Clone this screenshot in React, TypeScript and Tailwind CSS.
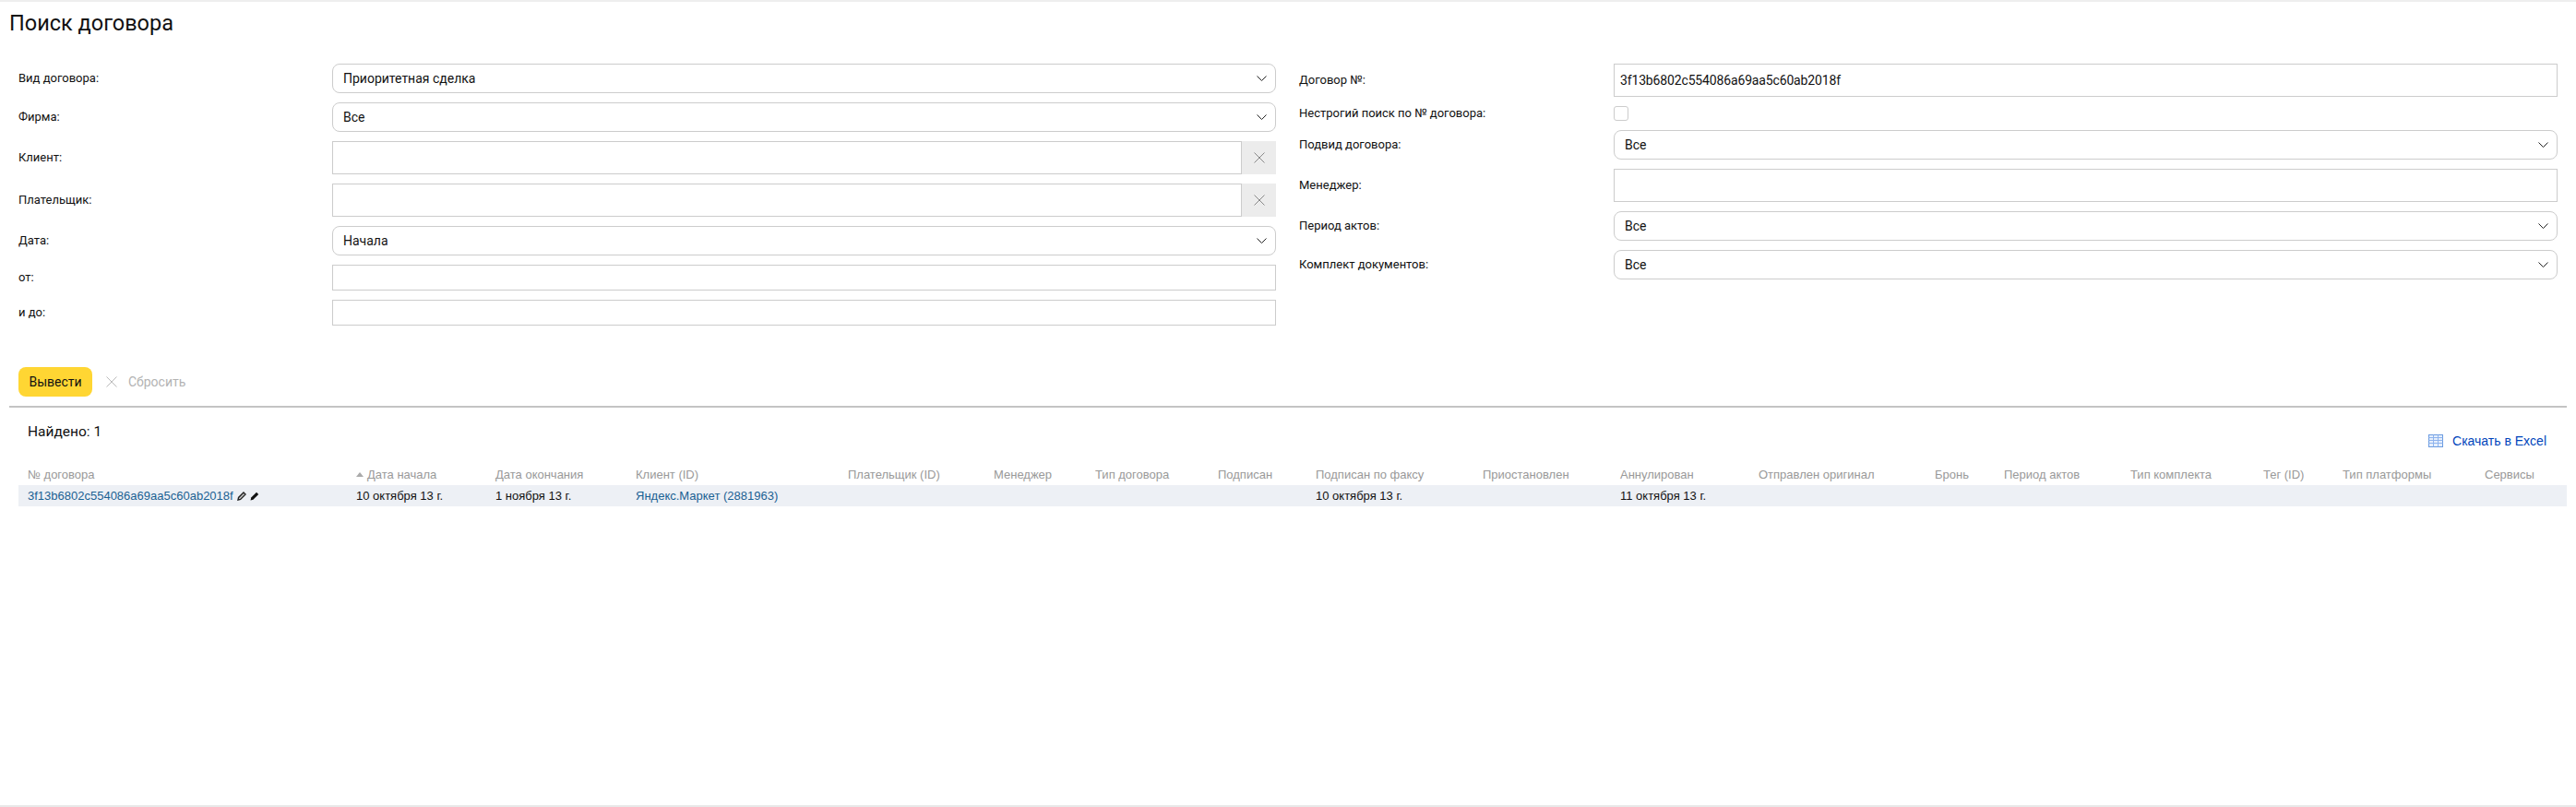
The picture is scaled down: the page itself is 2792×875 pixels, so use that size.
import React from "react";

const columns = [
  "№ договора",
  "Дата начала",
  "Дата окончания",
  "Клиент (ID)",
  "Плательщик (ID)",
  "Менеджер",
  "Тип договора",
  "Подписан",
  "Подписан по факсу",
  "Приостановлен",
  "Аннулирован",
  "Отправлен оригинал",
  "Бронь",
  "Период актов",
  "Тип комплекта",
  "Тег (ID)",
  "Тип платформы",
  "Сервисы",
];

const gridCols =
  "grid grid-cols-[356px_151px_152px_230px_158px_110px_133px_106px_181px_149px_150px_191px_75px_137px_144px_86px_154px_99px]";

function Chevron() {
  return (
    <svg width="11" height="6" viewBox="0 0 11 6" fill="none" className="shrink-0">
      <path d="M.5.5l5 5 5-5" stroke="#222" strokeWidth="1" />
    </svg>
  );
}

function Cross({ size = 12, color = "#888" }: { size?: number; color?: string }) {
  return (
    <svg width={size} height={size} viewBox="0 0 12 12" fill="none" className="shrink-0">
      <path d="M.5.5l11 11M11.5.5l-11 11" stroke={color} strokeWidth="1" />
    </svg>
  );
}

function Row({ label, children, labelW }: { label: string; children: React.ReactNode; labelW: string }) {
  return (
    <div className="flex items-center">
      <div className={`${labelW} shrink-0 text-[13px] leading-4 text-[#111]`}>{label}</div>
      <div className="flex-1">{children}</div>
    </div>
  );
}

function SelectBox({ value }: { value: string }) {
  return (
    <div className="flex h-8 items-center justify-between rounded-lg border border-[#ccc] pl-[11px] pr-[9px] text-[14px] text-[#111]">
      <span>{value}</span>
      <Chevron />
    </div>
  );
}

function TextBox({ value, small }: { value?: string; small?: boolean }) {
  return (
    <div className={`flex items-center border border-[#ccc] pl-[6px] text-[14px] tracking-[-0.15px] text-[#111] ${small ? "h-7" : "h-9"}`}>
      {value}
    </div>
  );
}

function ClearBox() {
  return (
    <div className="flex h-9">
      <div className="flex-1 border border-[#ccc]"></div>
      <div className="flex w-[37px] items-center justify-center bg-[#ececec]">
        <Cross />
      </div>
    </div>
  );
}

export default function App() {
  return (
    <div className="h-[875px] border-b-2 border-[#e8e8e8] bg-white font-['Roboto',sans-serif]">
      <div className="h-[2px] bg-[#eee]"></div>
      <h1 className="h-[67px] pl-[10px] pt-2 text-[23.5px] leading-[30px] text-[#111]">Поиск договора</h1>

      <div className="flex gap-[25px] px-[20px]">
        <div className="flex w-[1363px] flex-col gap-[10px]">
          <Row label="Вид договора:" labelW="w-[340px]"><SelectBox value="Приоритетная сделка" /></Row>
          <Row label="Фирма:" labelW="w-[340px]"><SelectBox value="Все" /></Row>
          <Row label="Клиент:" labelW="w-[340px]"><ClearBox /></Row>
          <Row label="Плательщик:" labelW="w-[340px]"><ClearBox /></Row>
          <Row label="Дата:" labelW="w-[340px]"><SelectBox value="Начала" /></Row>
          <Row label="от:" labelW="w-[340px]"><TextBox small /></Row>
          <Row label="и до:" labelW="w-[340px]"><TextBox small /></Row>
        </div>
        <div className="flex w-[1364px] flex-col gap-[10px]">
          <Row label="Договор №:" labelW="w-[341px]"><TextBox value="3f13b6802c554086a69aa5c60ab2018f" /></Row>
          <Row label="Нестрогий поиск по № договора:" labelW="w-[341px]">
            <div className="h-4 w-4 rounded-[3px] border border-[#ccc]"></div>
          </Row>
          <Row label="Подвид договора:" labelW="w-[341px]"><SelectBox value="Все" /></Row>
          <Row label="Менеджер:" labelW="w-[341px]"><TextBox /></Row>
          <Row label="Период актов:" labelW="w-[341px]"><SelectBox value="Все" /></Row>
          <Row label="Комплект документов:" labelW="w-[341px]"><SelectBox value="Все" /></Row>
        </div>
      </div>

      <div className="ml-[20px] mt-[45px] flex h-8 items-center">
        <button className="h-8 w-20 rounded-lg bg-[#ffd633] text-[14px] text-[#111]">Вывести</button>
        <span className="ml-[15px]"><Cross color="#bbb" /></span>
        <span className="ml-3 text-[14px] text-[#b3b3b3]">Сбросить</span>
      </div>

      <div className="mx-[10px] mt-[10px] h-[2px] bg-[#c4c4c4]"></div>

      <div className="font-['Liberation_Sans',sans-serif]">
        <div className="relative h-[52px] pl-[30px] pr-[32px]">
          <div className="pt-[16px] font-['Roboto',sans-serif] text-[15.5px] leading-5 text-[#111]">Найдено: 1</div>
          <a className="absolute right-[32px] top-[26px] flex items-center text-[14px] leading-5 text-[#04b]">
            <svg width="16" height="14" viewBox="0 0 16 14" fill="none" className="mr-[10px]">
              <rect x=".5" y=".5" width="15" height="13" fill="#e6effc" stroke="#6b9be0" />
              <path d="M.5 3.5h15M.5 6.5h15M.5 9.5h15M5.5 .5v13M10.5 .5v13" stroke="#8fb4ee" />
            </svg>
            Скачать в Excel
          </a>
        </div>

        <div className="ml-[20px] mr-[10px] mt-[9px]">
          <div className={`${gridCols} h-[23px] items-center text-[13px] text-[#999]`}>
            {columns.map((c, i) => (
              <div key={c} className="flex items-center whitespace-nowrap pl-[10px]">
                {i === 1 && (
                  <svg width="8" height="5" viewBox="0 0 8 5" className="mr-[4px]">
                    <path d="M4 0l4 5H0z" fill="#aaa" />
                  </svg>
                )}
                {c}
              </div>
            ))}
          </div>
          <div className={`${gridCols} h-[23px] items-center bg-[#edf0f5] text-[13px] text-[#111]`}>
            <div className="flex items-center whitespace-nowrap pl-[10px] text-[#1a6193]">
              3f13b6802c554086a69aa5c60ab2018f
              <svg width="10" height="10" viewBox="0 0 10 10" fill="none" className="ml-[4px]">
                <path d="M1 9l.6-2.6L7 1l2 2-5.4 5.4L1 9z" fill="#ccc" stroke="#222" strokeWidth="1.4" />
              </svg>
              <svg width="10" height="10" viewBox="0 0 10 10" className="ml-[4px]">
                <path d="M0.5 9.5l.7-2.9L7 .8l2.2 2.2L3.4 8.8.5 9.5z" fill="#111" />
              </svg>
            </div>
            <div className="whitespace-nowrap pl-[10px]">10 октября 13 г.</div>
            <div className="whitespace-nowrap pl-[10px]">1 ноября 13 г.</div>
            <div className="whitespace-nowrap pl-[10px] text-[#1a6193]">Яндекс.Маркет (2881963)</div>
            <div></div>
            <div></div>
            <div></div>
            <div></div>
            <div className="whitespace-nowrap pl-[10px]">10 октября 13 г.</div>
            <div></div>
            <div className="whitespace-nowrap pl-[10px]">11 октября 13 г.</div>
          </div>
        </div>
      </div>
    </div>
  );
}
